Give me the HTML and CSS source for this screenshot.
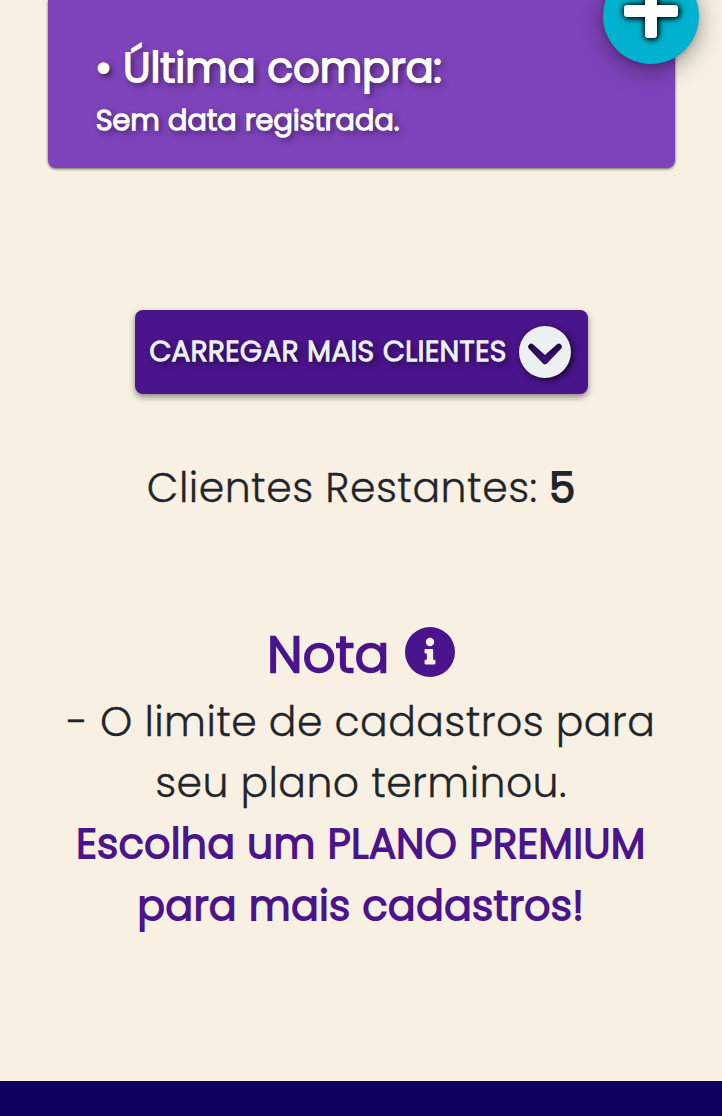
FILE: index.html
```html
<!DOCTYPE html>
<html lang="pt-BR">
<head>
<meta charset="utf-8">
<title>Clientes</title>
<link rel="stylesheet" href="styles.css">
</head>
<body>
<main class="page">
  <section class="card">
    <h2 class="card-title">• Última compra:</h2>
    <p class="card-text">Sem data registrada.</p>
  </section>
  <button class="fab" aria-label="Adicionar">
    <svg class="fab-icon" viewBox="0 0 54 54"><path d="M24 0h6q3 0 3 3v18h18q3 0 3 3v6q0 3-3 3H33v18q0 3-3 3h-6q-3 0-3-3V33H3q-3 0-3-3v-6q0-3 3-3h18V3q0-3 3-3z"/></svg>
  </button>
  <button class="load-more">
    <span class="load-label">CARREGAR MAIS CLIENTES</span>
    <svg class="load-icon" viewBox="0 0 512 512"><path d="M256 0a256 256 0 1 1 0 512 256 256 0 0 1 0-512zM137 180c-9-9-24-9-33 0l-8 8c-9 9-9 24 0 33l143 150c9 9 25 9 34 0l143-150c9-9 9-24 0-33l-8-8c-9-9-24-9-33 0L256 285z" fill-rule="evenodd"/></svg>
  </button>
  <p class="remaining">Clientes Restantes: <b class="count">5</b></p>
  <section class="note">
    <h3 class="note-title"><span class="note-name">Nota</span>
      <svg class="note-icon" viewBox="0 0 512 512"><path fill-rule="evenodd" d="M256 0a256 256 0 1 1 0 512 256 256 0 0 1 0-512zM256 110a43 43 0 1 0 0 86 43 43 0 0 0 0-86zM212 224c-7 0-12 5-12 12v24c0 7 5 12 12 12h12v64h-12c-7 0-12 5-12 12v24c0 7 5 12 12 12h88c7 0 12-5 12-12v-24c0-7-5-12-12-12h-12V236c0-7-5-12-12-12z"/></svg>
    </h3>
    <p class="line">- O limite de cadastros para</p>
    <p class="line">seu plano terminou.</p>
    <p class="line strong">Escolha um PLANO PREMIUM</p>
    <p class="line strong">para mais cadastros!</p>
  </section>
  <footer class="footer"></footer>
</main>
</body>
</html>
```
FILE: styles.css
```css
* { box-sizing: border-box; }
body {
  margin: 0;
  background: #f7f0e3;
  color: #212529;
  font-family: Poppins, Inter, "Open Sans", sans-serif;
  font-weight: 300;
  overflow: hidden;
}
h2, h3, p { margin: 0; font-weight: 300; white-space: nowrap; }
button { border: 0; padding: 0; font: inherit; }
.page {
  position: relative;
  display: flex;
  flex-direction: column;
  align-items: center;
  height: 1116px;
}
.card {
  align-self: flex-start;
  margin-left: 48px;
  width: 627px;
  height: 168px;
  padding: 36px 48px 0;
  border-radius: 0 0 8px 8px;
  background: #7e43bb;
  color: #fff;
  text-shadow: 3px 3px 6px rgba(0, 0, 0, .75);
  box-shadow: 0 1px 3px rgba(0, 0, 0, .6);
}
.card-title { font-size: 41px; line-height: 64px; letter-spacing: .45px; -webkit-text-stroke: 2.2px #fff; }
.card-text { font-size: 28.500px; line-height: 41px; letter-spacing: .25px; -webkit-text-stroke: 1.6px #fff; }
.fab {
  position: absolute;
  top: -32px;
  left: 603px;
  width: 96px;
  height: 96px;
  border-radius: 50%;
  background: #00b2cf;
  box-shadow: 0 6px 24px rgba(0, 0, 0, .38), 0 2px 5px rgba(0, 0, 0, .15);
}
.fab-icon {
  position: absolute;
  left: 21px;
  top: 16px;
  width: 54px;
  height: 54px;
  overflow: visible;
  fill: #fff;
  filter: drop-shadow(0 0 3px #000) drop-shadow(1px 1px 2px rgba(0, 0, 0, .7));
}
.load-more {
  display: flex;
  align-items: center;
  gap: 11px;
  width: 453px;
  height: 84px;
  margin-top: 142px;
  padding: 0 16px 0 15px;
  border-radius: 8px;
  background: #4a148c;
  color: #ecf0f1;
  box-shadow: 0 3px 6px rgba(0, 0, 0, .45);
}
.load-label {
  width: 358px;
  text-align: left;
  white-space: nowrap;
  font-size: 28px;
  letter-spacing: .75px;
  -webkit-text-stroke: 1.5px #ecf0f1;
  text-shadow: 3px 3px 6px rgba(0, 0, 0, .75);
}
.load-icon {
  flex: none;
  width: 52px;
  height: 52px;
  overflow: visible;
  fill: #ecf0f1;
  filter: drop-shadow(2px 2px 3px rgba(0, 0, 0, .75));
}
.remaining { margin-top: 63px; font-size: 41px; line-height: 61.5px; letter-spacing: .5px; -webkit-text-stroke: .3px #212529; }
.count { font-weight: 300; -webkit-text-stroke: 2.2px #212529; }
.note { width: 100%; margin-top: 95px; text-align: center; }
.note-title {
  display: flex;
  justify-content: center;
  align-items: center;
  gap: 15px;
  height: 77px;
  color: #4a148c;
  font-size: 51px;
}
.note-name { padding-top: 4px; letter-spacing: .5px; -webkit-text-stroke: 2.4px #4a148c; }
.note-icon { width: 50px; height: 50px; fill: #4a148c; }
.line { font-size: 41px; line-height: 61.4px; letter-spacing: .42px; -webkit-text-stroke: .3px #212529; }
.strong { color: #4a148c; font-size: 40.500px; letter-spacing: .75px; -webkit-text-stroke: 2px #4a148c; }
.footer { width: 100%; height: 35px; margin-top: auto; background: #10005e; }
```
